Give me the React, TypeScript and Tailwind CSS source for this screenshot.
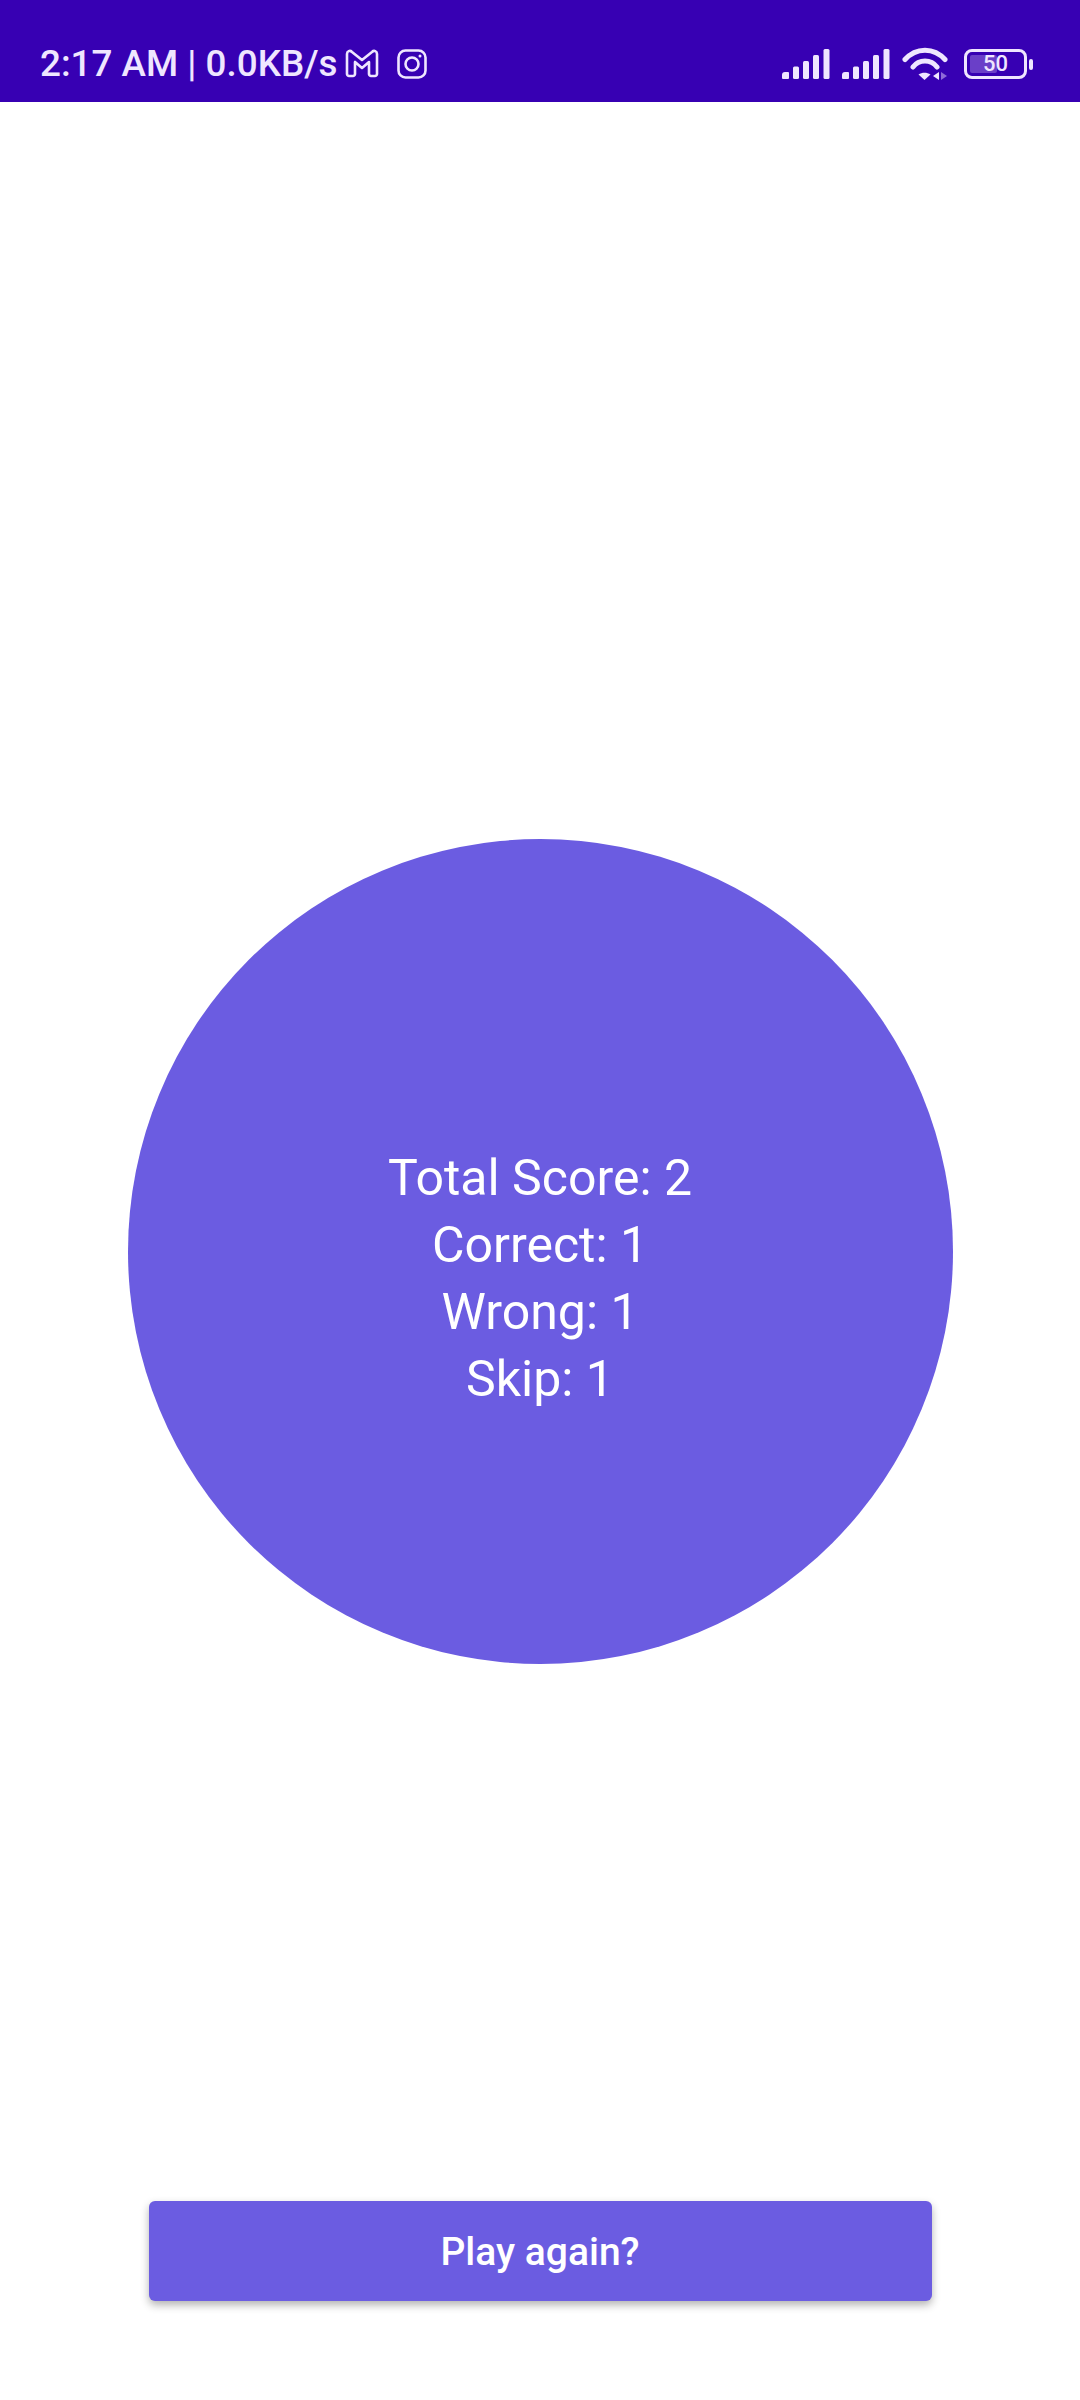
function Signal() {
    return (
        <svg width="50" height="32" viewBox="0 0 50 32" fill="#efe6ff">
            <path d="M1 31a1 1 0 0 1-1-1v-3a3 3 0 0 1 3-3h3a1 1 0 0 1 1 1v5a1 1 0 0 1-1 1z" />
            <rect x="11" y="18.5" width="6" height="12.5" rx="1.5" />
            <rect x="21" y="13" width="6" height="18" rx="1.5" />
            <rect x="31" y="7" width="6" height="24" rx="1.5" />
            <rect x="41.5" y="1" width="6" height="30" rx="1.5" />
        </svg>
    );
}

function Wifi() {
    return (
        <svg width="48" height="34" viewBox="0 0 48 34" fill="none">
            <path d="M3 12.5C14 0 32 0 43 12.5" stroke="#efe6ff" strokeWidth="5" strokeLinecap="round" />
            <path d="M11 20C17 12 29 12 35 20" stroke="#efe6ff" strokeWidth="5" strokeLinecap="round" />
            <path d="M22.5 33l-6-5.5c3.500-2.500 8.500-2.500 12 0z" fill="#efe6ff" />
            <path d="M37 25v8l-6-4z" fill="#efe6ff" />
            <path d="M39 25v8l6-4z" fill="#8f6ad8" />
        </svg>
    );
}

function GmailOutline() {
    return (
        <svg width="34" height="30" viewBox="0 0 34 30" fill="none" stroke="#efe6ff" strokeWidth="2.6" strokeLinejoin="round">
            <path d="M2 5c0-3 3-4 5-2l10 8 10-8c2-2 5-1 5 2v20c0 1-1 2-2 2h-4c-1 0-2-1-2-2V13l-7 6-7-6v12c0 1-1 2-2 2H4c-1 0-2-1-2-2z" />
        </svg>
    );
}

function Instagram() {
    return (
        <svg width="30" height="30" viewBox="0 0 30 30" fill="none" stroke="#efe6ff" strokeWidth="2.6">
            <rect x="1.500" y="1.500" width="27" height="27" rx="7" />
            <circle cx="15" cy="15" r="6.500" />
            <circle cx="23" cy="7" r="1.500" fill="#efe6ff" stroke="none" />
        </svg>
    );
}

function StatusBar() {
    return (
        <div className="h-[102px] bg-[#3700b3] flex items-center pl-[40px] pr-[47px] pt-[26px] text-[#efe6ff]">
            <p className="w-[298px] whitespace-nowrap text-[36.8px] leading-none font-medium">2:17 AM | 0.0KB/s</p>
            <div className="ml-[7px]"><GmailOutline /></div>
            <div className="ml-[18px]"><Instagram /></div>
            <div className="ml-auto flex items-center">
                <Signal />
                <div className="ml-[10px]"><Signal /></div>
                <div className="ml-[10px]"><Wifi /></div>
                <div className="ml-[14px] flex items-center">
                    <div className="w-[63px] h-[30px] rounded-[8px] border-[3px] border-[#efe6ff] p-[3px] relative">
                        <div className="w-[27px] h-full bg-[#6a3fc8] rounded-[2px]"></div>
                        <span className="absolute inset-0 flex items-center justify-center text-[22px] leading-none font-medium">50</span>
                    </div>
                    <div className="ml-[2px] w-[4px] h-[11px] rounded-[2px] bg-[#efe6ff]"></div>
                </div>
            </div>
        </div>
    );
}

export default function App() {
    return (
        <div className="w-[1080px] h-[2400px] bg-white flex flex-col items-center font-['Roboto',sans-serif]">
            <div className="w-full"><StatusBar /></div>
            <div className="mt-[737px] w-[825px] h-[825px] pt-[54px] rounded-full bg-[#6b5ce1] flex flex-col items-center justify-center text-white text-[50px] leading-[67px]">
                <p>Total Score: 2</p>
                <p>Correct: 1</p>
                <p>Wrong: 1</p>
                <p>Skip: 1</p>
            </div>
            <button className="mt-[537px] w-[783px] h-[100px] pt-[2px] rounded-[6px] bg-[#6b5ce1] text-white text-[39px] font-medium shadow-[0_4px_8px_rgba(0,0,0,0.3)]">
                Play again?
            </button>
        </div>
    );
}
